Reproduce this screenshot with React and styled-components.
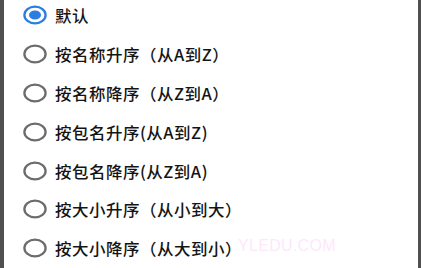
import React from 'react'
import styled, { createGlobalStyle } from 'styled-components'

const GlobalStyle = createGlobalStyle`
    html, body {
        margin: 0;
        padding: 0;
        background: #4a4a4a;
        overflow: hidden;
    }
    body {
        font-family: "Noto Sans CJK SC", "Noto Sans", sans-serif;
    }
`

const options = [
    '默认',
    '按名称升序（从A到Z）',
    '按名称降序（从Z到A）',
    '按包名升序(从A到Z)',
    '按包名降序(从Z到A)',
    '按大小升序（从小到大）',
    '按大小降序（从大到小）',
]

function Radio({ checked }) {
    const color = checked ? '#2b7de0' : '#6c6c6c'
    return (
        <svg width="24" height="20" viewBox="0 0 24 20">
            <ellipse cx="12" cy="10" rx="10.6" ry="8.4" fill="none" stroke={color} strokeWidth="2.3" />
            {checked && <ellipse cx="12" cy="10" rx="6" ry="4.6" fill={color} />}
        </svg>
    )
}

export default function App() {
    return (
        <Screen>
            <GlobalStyle />
            <Panel>
                <List>
                    {options.map((label, i) => (
                        <Row key={label}>
                            <Radio checked={i === 0} />
                            <Label>{label}</Label>
                        </Row>
                    ))}
                </List>
                <Watermark>YLEDU.COM</Watermark>
            </Panel>
        </Screen>
    )
}

const Screen = styled.div`
    width: 421px;
    height: 268px;
    display: flex;
    padding-left: 4px;
    padding-right: 3px;
    box-sizing: border-box;
    background: #505050;
`

const Panel = styled.div`
    position: relative;
    flex: 1;
    background: #ffffff;
    overflow: hidden;
`

const List = styled.div`
    position: relative;
    z-index: 1;
    display: flex;
    flex-direction: column;
    margin-top: -4px;
`

const Row = styled.div`
    height: 38.8px;
    display: flex;
    align-items: center;
    gap: 8px;
    padding-left: 19px;
`

const Label = styled.span`
    font-size: 16px;
    font-weight: 500;
    letter-spacing: 0.5px;
    color: #141414;
    line-height: 1;
    transform: scaleX(1.03);
    transform-origin: left center;
`

const Watermark = styled.div`
    position: absolute;
    left: 234px;
    top: 237px;
    font-family: "Liberation Sans", sans-serif;
    font-size: 16px;
    letter-spacing: 0.3px;
    color: #fde8fb;
    white-space: nowrap;
    pointer-events: none;
    z-index: 0;
`
